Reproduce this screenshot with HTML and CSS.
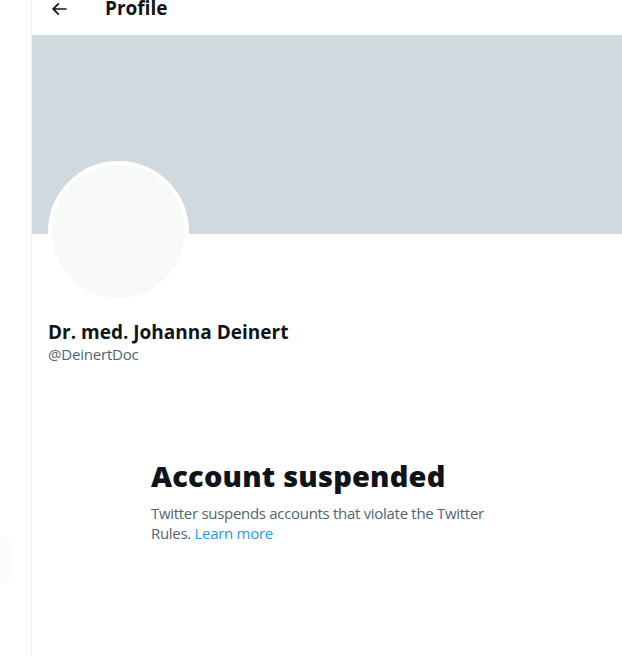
FILE: index.html
```html
<!DOCTYPE html>
<html lang="en">
<head>
    <meta charset="UTF-8">
    <meta name="viewport" content="width=device-width, initial-scale=1.0">
    <title>Profile</title>
    <link rel="stylesheet" href="styles.css">
</head>
<body>
    <div class="side">
        <div class="side-blob"></div>
    </div>
    <main class="column">
        <div class="header">
            <button class="back" aria-label="Back">
                <svg viewBox="0 0 24 24" width="20" height="20"><path d="M7.414 13l5.043 5.04-1.414 1.42L3.586 12l7.457-7.46 1.414 1.42L7.414 11H21v2H7.414z"></path></svg>
            </button>
            <h2 class="title">Profile</h2>
        </div>

        <div class="banner"></div>

        <div class="profile">
            <div class="avatar"></div>
            <div class="name">Dr. med. Johanna Deinert</div>
            <div class="handle">@DeinertDoc</div>
        </div>

        <div class="empty">
            <h1 class="empty-title">Account suspended</h1>
            <p class="empty-text">Twitter suspends accounts that violate the Twitter Rules. <a href="#">Learn more</a></p>
        </div>
    </main>
</body>
</html>
```

FILE: styles.css
```css
body {
    margin: 0;
    background: #fff;
    font-family: "Open Sans", "Noto Sans", sans-serif;
    color: #0f1419;
    display: flex;
    height: 656px;
    overflow: hidden;
}
.side {
    width: 31px;
    flex-shrink: 0;
    position: relative;
}
.side-blob {
    position: absolute;
    left: -20px;
    top: 535px;
    width: 32px;
    height: 50px;
    border-radius: 16px;
    background: #fbfbfb;
}
.column {
    flex: 1;
    border-left: 1px solid #eff3f4;
    min-height: 656px;
}
.header {
    height: 35px;
    display: flex;
    align-items: flex-start;
}
.back {
    border: 0;
    background: none;
    padding: 0;
    margin: 0 0 0 17px;
    width: 20px;
    height: 18px;
    display: flex;
    align-items: center;
    justify-content: center;
}
.back svg {
    fill: #0f1419;
}
.title {
    margin: -4px 0 0 36px;
    font-size: 19px;
    line-height: 24px;
    font-weight: 700;
}
.banner {
    height: 199px;
    background: #cfd9de;
}
.profile {
    padding: 0 16px;
}
.avatar {
    width: 133px;
    height: 133px;
    margin-top: -73px;
    border: 4px solid #fff;
    border-radius: 50%;
    background: #f7f9f9;
}
.name {
    margin-top: 18px;
    font-size: 19px;
    line-height: 24px;
    font-weight: 700;
}
.handle {
    font-size: 15px;
    line-height: 20px;
    color: #536471;
    letter-spacing: -0.2px;
}
.empty {
    width: 345px;
    margin: 94px 0 0 119px;
}
.empty-title {
    margin: 0;
    font-size: 29px;
    line-height: 36px;
    font-weight: 800;
    letter-spacing: 0.2px;
}
.empty-text {
    margin: 9px 0 0;
    font-size: 15px;
    line-height: 20px;
    color: #536471;
    letter-spacing: -0.3px;
}
.empty-text a {
    color: #1d9bf0;
    text-decoration: none;
}
```
